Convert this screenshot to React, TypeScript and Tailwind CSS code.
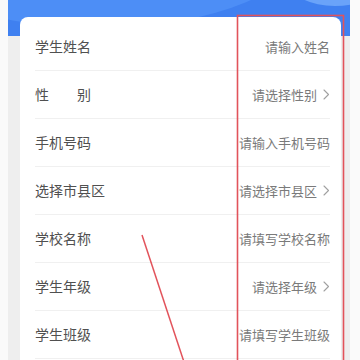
import React from "react";

type Row = { label: string; placeholder: string; arrow?: boolean; spaced?: boolean };

const rows: Row[] = [
  { label: "学生姓名", placeholder: "请输入姓名" },
  { label: "性别", placeholder: "请选择性别", arrow: true, spaced: true },
  { label: "手机号码", placeholder: "请输入手机号码" },
  { label: "选择市县区", placeholder: "请选择市县区", arrow: true },
  { label: "学校名称", placeholder: "请填写学校名称" },
  { label: "学生年级", placeholder: "请选择年级", arrow: true },
  { label: "学生班级", placeholder: "请填写学生班级" },
];

function Chevron() {
  return (
    <svg width="7" height="11" viewBox="0 0 7 11" className="ml-[6px] shrink-0">
      <path d="M1 1 L5.5 5.5 L1 10" fill="none" stroke="#a0a0a0" strokeWidth="1.1" strokeLinecap="round" strokeLinejoin="round" />
    </svg>
  );
}

export default function App() {
  return (
    <div
      className="relative w-[360px] h-[360px] overflow-hidden bg-[#fafafa]"
      style={{ fontFamily: '"Noto Sans CJK SC", "Noto Sans", sans-serif' }}
    >
      <div className="ml-[8px] w-[342px] h-full bg-[#eeeeee] flex flex-col">
        <div className="relative h-[36px] overflow-hidden bg-[#3f80f0] shrink-0">
          <div className="absolute left-[-120px] top-[-150px] w-[420px] h-[178px] rounded-[50%] bg-[#4d8ef6]" />
          <div className="absolute right-[-30px] top-[-40px] w-[90px] h-[46px] rounded-[50%] bg-[#6aa3f9]" />
        </div>
        <div className="relative ml-[12px] w-[321px] -mt-[19px] bg-white rounded-t-[8px] pt-[6px] pl-[15px] pr-[11px] flex-1">
          {rows.map((r) => (
            <div
              key={r.label}
              className="h-[48px] flex items-center justify-between border-b border-[#f0f0f0]"
            >
              {r.spaced ? (
                <div className="w-[56px] flex justify-between text-[14px] text-[#505050]">
                  <span>性</span>
                  <span>别</span>
                </div>
              ) : (
                <span className="text-[14px] text-[#505050]">{r.label}</span>
              )}
              <div className="flex items-center">
                <span className="text-[13px] text-[#7a7a7a]">{r.placeholder}</span>
                {r.arrow ? <Chevron /> : null}
              </div>
            </div>
          ))}
        </div>
      </div>
      <svg className="absolute left-0 top-0" width="360" height="360" viewBox="0 0 360 360">
        <rect x="237.5" y="15.5" width="106" height="400" fill="none" stroke="#e2535b" strokeWidth="1.6" />
        <line x1="142" y1="235" x2="184" y2="362" stroke="#e2535b" strokeWidth="1.5" />
      </svg>
    </div>
  );
}
